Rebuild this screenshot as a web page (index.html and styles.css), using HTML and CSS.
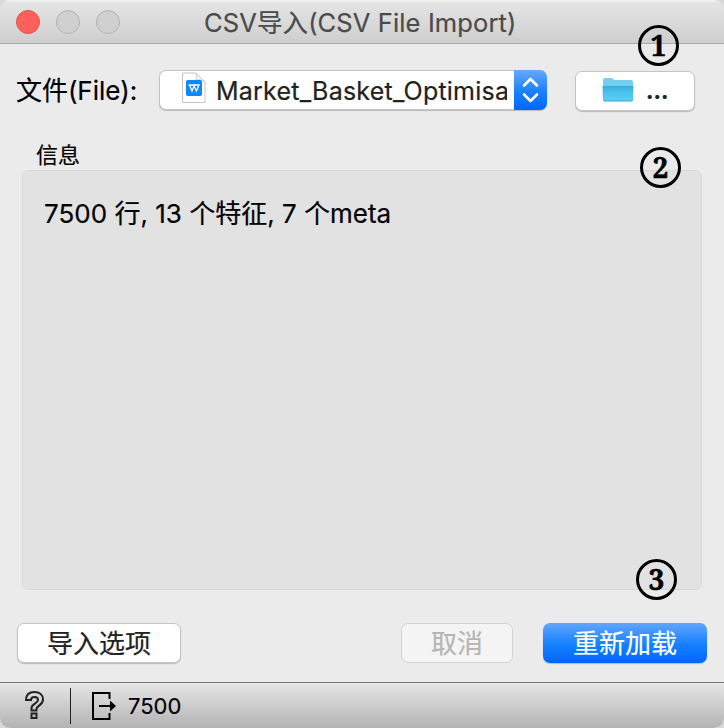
FILE: index.html
```html
<!DOCTYPE html>
<html lang="zh-CN">
<head>
<meta charset="utf-8">
<title>CSV导入(CSV File Import)</title>
<link rel="stylesheet" href="styles.css">
</head>
<body>
<div class="window">
  <header class="titlebar">
    <div class="lights"><i class="light close"></i><i class="light"></i><i class="light"></i></div>
    <h1 class="title">CSV导入(CSV File Import)</h1>
  </header>
  <main class="content">
    <div class="file-row">
      <label class="file-label">文件(File):</label>
      <div class="select">
        <svg class="doc" width="26" height="32" viewBox="0 0 26 32">
          <path d="M1.500 1H15l9 9v20.500H1.500z" fill="#fff" stroke="#c4c4c4"/>
          <path d="M15 1c1 3 .5 5-.5 7 3-1 6 0 9.500 2z" fill="#f4f4f4" stroke="#c4c4c4" stroke-width=".8"/>
          <rect x="5" y="8" width="16" height="16" rx="1.800" fill="#1287f8"/>
          <path d="M7.500 13h10.500l-2.500 6-2.500-5-2 5-2.500-6" fill="none" stroke="#fff" stroke-width="1.300"/>
        </svg>
        <span class="file-name">Market_Basket_Optimisat</span>
        <span class="stepper">
          <svg width="33" height="40" viewBox="0 0 33 40"><path d="M10 15.500l6.500-6.500 6.500 6.500M10 24.500l6.500 6.500 6.500-6.500" fill="none" stroke="#fff" stroke-width="2.600" stroke-linecap="round" stroke-linejoin="round"/></svg>
        </span>
      </div>
      <button class="button browse">
        <svg width="32" height="26" viewBox="0 0 32 26">
          <defs><linearGradient id="folder" x2="0" y2="1"><stop offset="0" stop-color="#35addb"/><stop offset=".3" stop-color="#43bfe9"/><stop offset="1" stop-color="#61cff4"/></linearGradient></defs>
          <path d="M1 10V3q0-2 2-2h6q1 0 2 1t2 1h16q2 0 2 2v5z" fill="#72cfed"/>
          <path d="M.500 9h31L31 23q0 1.500-1.500 1.500h-27Q1 24.500 1 23z" fill="url(#folder)"/>
          <path d="M1.500 23.800h29" stroke="#43add5"/>
        </svg>
        <span class="dots">...</span>
      </button>
    </div>
    <h2 class="group-title">信息</h2>
    <section class="group"><p class="summary">7500 行, 13 个特征, 7 个meta</p></section>
    <div class="actions">
      <button class="button options">导入选项</button>
      <button class="button cancel" disabled>取消</button>
      <button class="button reload">重新加载</button>
    </div>
  </main>
  <footer class="status">
    <svg class="help" width="20" height="29" viewBox="0 0 20 29"><path d="M1 9C1 3.500 4.500 1 9.500 1s8.500 3 8.500 7.500c0 6-6.500 6-6.500 9.500v1.500h-5V17c0-4 6.500-4.500 6.500-8 0-2-1.500-3-3.500-3S6 7 6 9zM6.500 22.500h5v4.500h-5z" fill="none" stroke="#222" stroke-width="2"/></svg>
    <i class="divider"></i>
    <svg class="output" width="26" height="28" viewBox="0 0 26 28"><path d="M17.500 7V1H1v26h16.500v-6M7 14h12" fill="none" stroke="#000" stroke-width="2"/><path d="M18 8.500l6 5.500-6 5.500z"/></svg>
    <span class="count">7500</span>
  </footer>
  <b class="mark one">1</b>
  <b class="mark two">2</b>
  <b class="mark three">3</b>
</div>
</body>
</html>
```
FILE: styles.css
```css
* { box-sizing: border-box; }
body { margin: 0; background: #d8d8d8; font-family: Inter, "Noto Sans CJK SC", sans-serif; font-size: 26px; color: #000; }
svg { display: block; flex: none; }
.window { position: relative; width: 724px; height: 728px; display: flex; flex-direction: column; background: #ebebeb; border-radius: 10px; overflow: hidden; white-space: nowrap; -webkit-text-stroke: .2px; }
.titlebar { height: 44px; flex: none; display: flex; align-items: center; padding-left: 16px; background: linear-gradient(#f2f2f2 0, #e4e4e4 3px, #cfcfcf 42px); border-bottom: 1px solid #a9a9a9; }
.lights { display: flex; gap: 16px; width: 188px; }
.light { width: 24px; height: 24px; border-radius: 50%; background: #d0d0d0; border: 1px solid #b2b2b2; }
.close { background: #fc605b; border-color: #e7504b; }
.title { margin: 0; font-size: 25.5px; font-weight: 400; color: #4b4b4b; line-height: 36px; padding-top: 2px; letter-spacing: .12px; }
.content { flex: 1; display: flex; flex-direction: column; }
.file-row { display: flex; height: 41px; margin: 26px 29px 0 16px; align-items: center; }
.file-label { width: 143px; font-size: 26px; line-height: 36px; letter-spacing: -.05px; }
.select { display: flex; align-items: center; width: 388px; height: 40px; margin-bottom: 1px; padding-left: 21px; border-radius: 7px; border: 1px solid #c4c4c4; border-right: 0; background: #fff; box-shadow: 0 1px 1px #0003; }
.doc { margin: 0 9px 4px 0; }
.file-name { width: 291px; overflow: hidden; color: #222; font-size: 25px; line-height: 36px; letter-spacing: .22px; padding-top: 1px; }
.stepper { width: 33px; height: 40px; margin-left: auto; border-radius: 0 7px 7px 0; background: linear-gradient(#67a8fc, #1980ff 55%, #0068fa); }
.button { display: flex; align-items: center; justify-content: center; height: 40px; padding: 0 0 3px; border: 1px solid #c4c4c4; border-radius: 7px; background: #fff; box-shadow: 0 1px 1px #0003; font: inherit; color: #222; }
.browse { width: 120px; margin-left: 28px; margin-top: 1px; padding: 0 0 2px; gap: 12px; }
.dots { line-height: 30px; font-size: 25px; font-weight: 600; letter-spacing: -.5px; }
.group-title { margin: 27px 0 0 36px; height: 32px; font-size: 22px; line-height: 34px; font-weight: 400; }
.group { height: 420px; margin: 0 22px; padding: 24px 21px; border: 1px solid #d8d8d8; border-radius: 7px; background: #e2e2e2; }
.summary { margin: 0; line-height: 38px; font-size: 26px; letter-spacing: 0; }
.actions { display: flex; margin: 33px 17px 0; }
.options { width: 164px; }
.cancel { width: 112px; margin-left: auto; margin-right: 30px; background: #f4f4f4; border-color: #d2d2d2; color: #b5b5b5; box-shadow: none; }
.reload { width: 164px; border: 0; padding-bottom: 4px; color: #fff; background: linear-gradient(#61a5fc, #1480ff 55%, #0066fa); }
.status { height: 46px; flex: none; display: flex; align-items: center; padding-left: 25px; border-top: 1px solid #777; background: linear-gradient(#e6e6e6, #b3b3b3); }
.divider { width: 1px; height: 36px; background: #222; margin: 0 21px 0 25px; }
.count { margin-left: 10px; font-size: 22px; }
.mark { position: absolute; width: 41px; height: 41px; border: 3px solid #000; border-radius: 50%; display: flex; align-items: center; justify-content: center; padding-bottom: 1px; font: 700 28px/1 "Noto Serif", "DejaVu Serif", serif; -webkit-text-stroke: .4px; }
.one { left: 638px; top: 25px; }
.two { left: 640px; top: 147px; }
.three { left: 636px; top: 559px; }
```
